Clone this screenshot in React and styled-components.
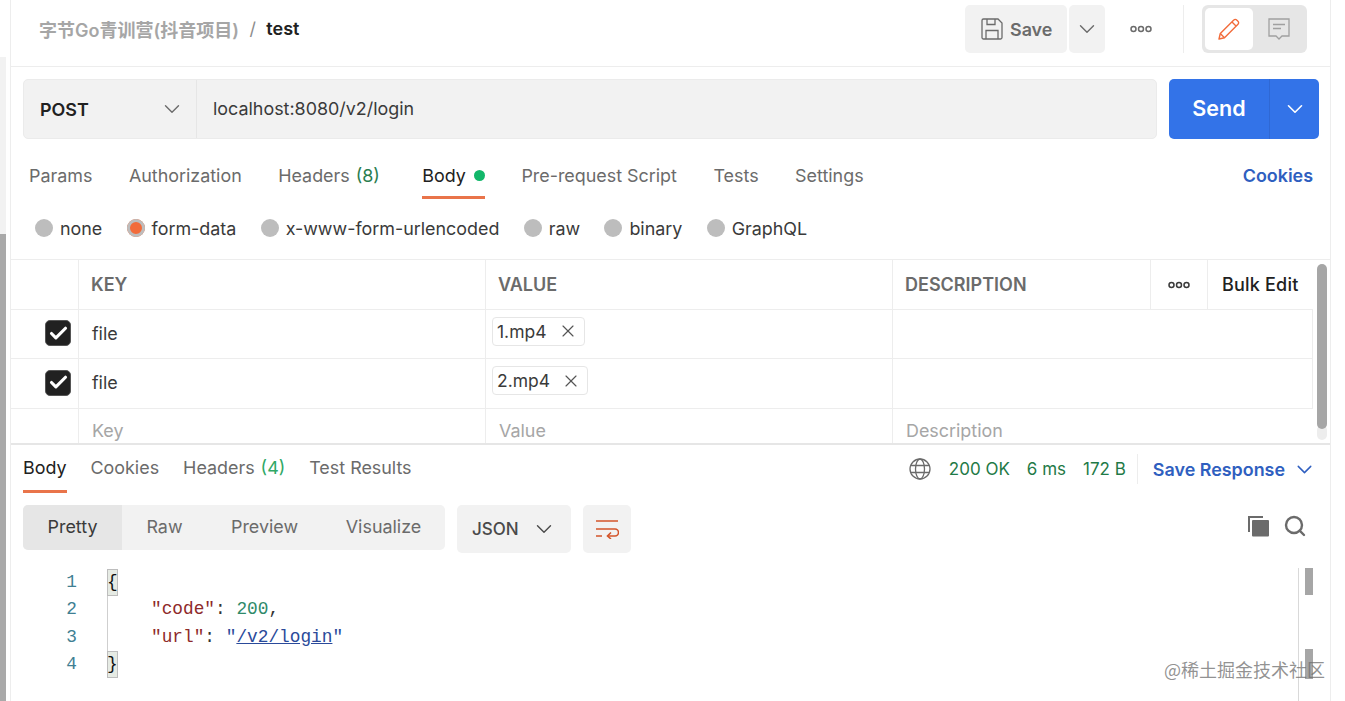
import styled, { createGlobalStyle } from "styled-components";
import { ChevronDown, X, Search, Check } from "lucide-react";

const GlobalStyle = createGlobalStyle`
  html, body {
    margin: 0;
    padding: 0;
    height: 701px;
    overflow: hidden;
    background: #fff;
  }
  * { box-sizing: border-box; }
  body {
    font-family: Inter, "Noto Sans CJK SC", "Liberation Sans", sans-serif;
    font-size: 17.9px;
    color: #212121;
  }
`;

const Page = styled.div`
  position: relative;
  display: flex;
  width: 1345px;
  height: 701px;
  overflow: hidden;
`;

const Gutter = styled.div`
  width: 11px;
  flex: none;
  border-right: 1px solid #ededed;
  display: flex;
  flex-direction: column;
`;

const GutterTop = styled.div`
  height: 57px;
`;

const GutterTrack = styled.div`
  width: 6px;
  height: 177px;
  background: #f2f2f2;
`;

const GutterThumb = styled.div`
  width: 6px;
  flex: 1;
  background: #a9a9a9;
`;

const Main = styled.main`
  width: 1320px;
  flex: none;
  border-right: 1px solid #ededed;
  display: flex;
  flex-direction: column;
`;

const Header = styled.header`
  height: 67px;
  flex: none;
  display: flex;
  align-items: flex-start;
  padding: 5px 23px 0 28px;
  border-bottom: 1px solid #ededed;
`;

const Crumbs = styled.div`
  flex: 1;
  display: flex;
  align-items: center;
  height: 47px;
  font-weight: 600;
`;

const CrumbParent = styled.span`
  color: #a6a6a6;
  font-size: 18px;
`;

const CrumbSep = styled.span`
  color: #8c8c8c;
  margin: 0 10.5px;
  font-weight: 400;
`;

const CrumbCurrent = styled.span`
  color: #212121;
  font-size: 18px;
`;

const SaveButton = styled.div`
  width: 102px;
  height: 48px;
  background: #f2f2f2;
  border-radius: 5px;
  display: flex;
  align-items: center;
  gap: 6px;
  padding-left: 15px;
  font-weight: 600;
  color: #6b6b6b;
`;

const SaveCaret = styled.div`
  width: 36px;
  height: 48px;
  margin-left: 2px;
  background: #f2f2f2;
  border-radius: 5px;
  display: flex;
  align-items: center;
  justify-content: center;
  color: #6b6b6b;
`;

const MoreButton = styled.div`
  width: 79px;
  height: 48px;
  padding-right: 6px;
  display: flex;
  align-items: center;
  justify-content: center;
  color: #6b6b6b;
  border-right: 1px solid #ededed;
`;

const ModeToggle = styled.div`
  width: 105px;
  height: 48px;
  margin-left: 18px;
  background: #e6e6e6;
  border-radius: 6px;
  padding: 3px;
  display: flex;
`;

const ModeItem = styled.div`
  width: 48px;
  flex: ${(p) => (p.$active ? "none" : 1)};
  display: flex;
  align-items: center;
  justify-content: center;
  border-radius: 5px;
  background: ${(p) => (p.$active ? "#fff" : "transparent")};
  color: ${(p) => (p.$active ? "#f26b3a" : "#a0a0a0")};
`;

const UrlRow = styled.div`
  display: flex;
  gap: 12px;
  padding: 12px 11px 0 12px;
`;

const UrlBox = styled.div`
  flex: 1;
  height: 60px;
  display: flex;
  background: #f2f2f2;
  border: 1px solid #ebebeb;
  border-radius: 5px;
`;

const MethodSelect = styled.div`
  width: 173px;
  display: flex;
  align-items: center;
  justify-content: space-between;
  padding: 0 11px 0 16px;
  border-right: 1px solid #e6e6e6;
  font-weight: 600;
  color: #212121;
`;

const UrlText = styled.div`
  display: flex;
  align-items: center;
  padding: 0 0 2px 16px;
  color: #3a3a3a;
`;

const SendButton = styled.div`
  width: 150px;
  height: 60px;
  display: flex;
  background: #3373e8;
  border-radius: 5px;
  color: #fff;
`;

const SendLabel = styled.div`
  width: 101px;
  display: flex;
  align-items: center;
  justify-content: center;
  padding-bottom: 2px;
  font-size: 21.5px;
  font-weight: 600;
  border-right: 1px solid #2f68d4;
`;

const SendCaret = styled.div`
  flex: 1;
  display: flex;
  align-items: center;
  justify-content: center;
`;

const RequestTabs = styled.nav`
  height: 60px;
  flex: none;
  display: flex;
  gap: 36.5px;
  padding: 0 17px 0 18px;
`;

const Tab = styled.div`
  display: flex;
  align-items: center;
  height: 100%;
  padding-top: 19px;
  padding-bottom: 4px;
  margin-right: ${(p) => (p.$wide ? 6 : 0)}px;
  border-bottom: 3px solid ${(p) => (p.$active ? "#e9744a" : "transparent")};
  color: ${(p) => (p.$active ? "#212121" : "#6b6b6b")};
  white-space: nowrap;
`;

const Count = styled.span`
  color: ${(p) => p.$color};
  margin-left: 6px;
`;

const BodyDot = styled.span`
  width: 11px;
  height: 11px;
  margin-left: 8px;
  border-radius: 50%;
  background: #12b76a;
`;

const TabLink = styled.div`
  margin-left: auto;
  display: flex;
  align-items: center;
  padding-top: 16px;
  padding-bottom: 4px;
  color: #2f5fc0;
  font-weight: 600;
`;

const RadioRow = styled.div`
  height: 60px;
  flex: none;
  display: flex;
  align-items: center;
  gap: 24.3px;
  padding: 0 0 2px 24px;
`;

const RadioItem = styled.label`
  display: flex;
  align-items: center;
  gap: 7px;
  color: #3a3a3a;
`;

const RadioDot = styled.span`
  width: 18px;
  height: 18px;
  border-radius: 50%;
  background: ${(p) => (p.$on ? "#f26b3a" : "#bdbdbd")};
  box-shadow: ${(p) => (p.$on ? "inset 0 0 0 3px #bdbdbd" : "none")};
`;

const TableWrap = styled.div`
  height: 186px;
  flex: none;
  display: flex;
  border-top: 1px solid #ededed;
  border-bottom: 2px solid #e6e6e6;
  overflow: hidden;
`;

const Table = styled.div`
  width: 1302px;
  flex: none;
  display: grid;
  grid-template-columns: 67px 407px 407px 258px 57px 106px;
  grid-template-rows: 50px 49px 50px 34px;
`;

const HeadCell = styled.div`
  display: flex;
  align-items: center;
  padding-left: 12px;
  font-size: 18px;
  font-weight: 600;
  color: #6b6b6b;
  border-left: ${(p) => (p.$first ? "none" : "1px solid #ededed")};
  border-bottom: 1px solid #ededed;
`;

const HeadAction = styled(HeadCell)`
  padding-left: 14px;
  color: #212121;
  font-weight: 500;
  letter-spacing: 0.2px;
`;

const HeadDots = styled(HeadCell)`
  padding-left: 17px;
  color: #3a3a3a;
`;

const CheckCell = styled.div`
  display: flex;
  align-items: center;
  padding: 0 0 2px 34px;
  border-bottom: ${(p) => (p.$last ? "none" : "1px solid #ededed")};
`;

const CheckBox = styled.span`
  width: 26px;
  height: 26px;
  border-radius: 5px;
  background: #212121;
  border: 1px solid #555;
  display: flex;
  align-items: center;
  justify-content: center;
  color: #fff;
`;

const Cell = styled.div`
  display: flex;
  align-items: center;
  padding-left: ${(p) => p.$pad ?? 13}px;
  padding-top: ${(p) => (p.$last ? 8 : 0)}px;
  padding-bottom: ${(p) => (p.$last ? 0 : 2)}px;
  grid-column: ${(p) => p.$span ?? "auto"};
  border-left: 1px solid #ededed;
  border-right: ${(p) => (p.$end ? "1px solid #ededed" : "none")};
  border-bottom: ${(p) => (p.$last ? "none" : "1px solid #ededed")};
  color: ${(p) => (p.$muted ? "#a6a6a6" : "#3a3a3a")};
`;

const FileChip = styled.span`
  height: 29px;
  margin-top: -4px;
  display: flex;
  align-items: center;
  gap: 11px;
  padding: 0 6px 0 4px;
  border: 1px solid #e6e6e6;
  border-radius: 4px;
  font-size: 17.5px;
  color: #3a3a3a;
`;

const TableScroll = styled.div`
  flex: 1;
  position: relative;
`;

const TableThumb = styled.div`
  position: absolute;
  left: 4px;
  top: 4px;
  width: 10px;
  height: 165px;
  border-radius: 5px;
  background: #a6a6a6;
`;

const TableThumbEnd = styled.div`
  position: absolute;
  left: 4px;
  top: 165px;
  width: 10px;
  height: 15px;
  border-radius: 5px;
  background: #ededed;
`;

const ResponseBar = styled.div`
  height: 48px;
  flex: none;
  display: flex;
  align-items: stretch;
  padding: 0 13px 0 12px;
`;

const ResponseTabs = styled.nav`
  display: flex;
  gap: 24px;
`;

const ResponseTab = styled(Tab)`
  padding-top: 0;
  padding-bottom: 0;
`;

const ResponseStatus = styled.div`
  margin-left: auto;
  display: flex;
  align-items: center;
  color: #6b6b6b;
`;

const StatusValue = styled.span`
  color: #1f7a47;
  font-size: 17px;
  margin-left: ${(p) => p.$gap}px;
`;

const StatusDivider = styled.span`
  width: 1px;
  height: 30px;
  margin: 0 15px 0 11px;
  background: #ededed;
`;

const SaveResponse = styled.span`
  display: flex;
  align-items: center;
  gap: 7px;
  color: #2f5fc0;
  font-weight: 600;
`;

const Toolbar = styled.div`
  height: 75px;
  flex: none;
  display: flex;
  align-items: flex-start;
  padding: 12px 23px 0 12px;
`;

const ViewTabs = styled.div`
  width: 422px;
  height: 45px;
  display: flex;
  background: #f2f2f2;
  border-radius: 5px;
  overflow: hidden;
`;

const ViewTab = styled.div`
  width: ${(p) => p.$w}px;
  display: flex;
  align-items: center;
  justify-content: center;
  padding-bottom: 2px;
  background: ${(p) => (p.$active ? "#e6e6e6" : "transparent")};
  color: ${(p) => (p.$active ? "#3a3a3a" : "#6b6b6b")};
`;

const FormatSelect = styled.div`
  width: 114px;
  height: 48px;
  margin-left: 12px;
  display: flex;
  align-items: center;
  justify-content: space-between;
  padding: 0 14px 0 15px;
  background: #f2f2f2;
  border-radius: 5px;
  font-size: 17px;
  font-weight: 500;
  color: #4a4a4a;
`;

const WrapButton = styled.div`
  width: 48px;
  height: 48px;
  margin-left: 12px;
  display: flex;
  align-items: center;
  justify-content: center;
  background: #f2f2f2;
  border-radius: 5px;
  color: #d4552b;
`;

const ToolIcons = styled.div`
  margin-left: auto;
  height: 42px;
  display: flex;
  align-items: center;
  gap: 13px;
  color: #6b6b6b;
`;

const CodeArea = styled.div`
  flex: 1;
  display: flex;
  min-height: 0;
`;

const CodeLines = styled.div`
  width: 1288px;
  flex: none;
  padding-top: 1px;
  font-family: "Liberation Mono", "DejaVu Sans Mono", monospace;
  font-size: 17.8px;
  line-height: 27.3px;
  border-right: 1px solid #d9d9d9;
`;

const Line = styled.div`
  display: flex;
  height: 27.3px;
  white-space: pre;
`;

const LineNo = styled.span`
  width: 66px;
  flex: none;
  text-align: right;
  color: #3f7f93;
`;

const LineBody = styled.span`
  margin-left: 30px;
  padding-left: ${(p) => (p.$guide ? 44 : 0)}px;
  box-shadow: ${(p) => (p.$guide ? "inset 1px 0 0 #cfcfcf" : "none")};
`;

const Brace = styled.span`
  display: inline-block;
  width: 11px;
  height: 27px;
  background: #e6ebe4;
  outline: 1px solid #bdbdbd;
  outline-offset: -1px;
  color: #111;
  overflow: hidden;
`;

const Key = styled.span`
  color: #8e2a2a;
`;

const Num = styled.span`
  color: #2f8a6a;
`;

const Str = styled.span`
  color: #2a4a9a;
`;

const StrLink = styled(Str)`
  text-decoration: underline;
`;

const Punct = styled.span`
  color: #333;
`;

const CodeScroll = styled.div`
  flex: 1;
  position: relative;
`;

const CodeThumb = styled.div`
  position: absolute;
  left: 6px;
  top: ${(p) => p.$top}px;
  width: 8px;
  height: ${(p) => p.$h}px;
  background: #a6a6a6;
`;

const Watermark = styled.div`
  position: absolute;
  left: 1164px;
  top: 657px;
  font-family: "Noto Sans CJK SC", sans-serif;
  font-size: 18px;
  line-height: 24px;
  color: rgba(110, 110, 110, 0.75);
  white-space: nowrap;
`;

const SaveIcon = () => (
  <svg width="24" height="24" viewBox="0 0 24 24" fill="none" stroke="currentColor" strokeWidth="1.3">
    <path d="M2 3.500A1.500 1.500 0 0 1 3.500 2H18l4 4v14.500a1.500 1.500 0 0 1-1.500 1.500H3.500A1.500 1.500 0 0 1 2 20.500z" />
    <path d="M7 2v5.500h8V2M6 22v-8.500h12V22" />
  </svg>
);

const Dots = () => (
  <svg width="22" height="8" viewBox="0 0 22 8" fill="none" stroke="currentColor" strokeWidth="1.500">
    <circle cx="3.500" cy="4" r="2.500" />
    <circle cx="11" cy="4" r="2.500" />
    <circle cx="18.500" cy="4" r="2.500" />
  </svg>
);

const PencilIcon = () => (
  <svg width="24" height="24" viewBox="0 0 24 24" fill="none" stroke="currentColor" strokeWidth="1.400" strokeLinejoin="round">
    <path d="M2 22l1.300-5.500L16.800 3a2 2 0 0 1 2.900 0l1.300 1.300a2 2 0 0 1 0 2.900L7.500 20.700z" />
    <path d="M3.300 16.500l4.200 4.200M15 5l4 4" />
  </svg>
);

const CommentIcon = () => (
  <svg width="24" height="24" viewBox="0 0 24 24" fill="none" stroke="currentColor" strokeWidth="1.300">
    <path d="M2 2h20v17h-7l-3 3-3-3H2z" />
    <path d="M6 7.500h12M6 11.500h8" />
  </svg>
);

const WrapIcon = () => (
  <svg width="24" height="20" viewBox="0 0 24 20" fill="none" stroke="currentColor" strokeWidth="1.600">
    <path d="M1 2h22M1 10h19a3 3 0 0 1 0 7h-7M1 17h6" />
    <path d="M16 13.500L12.500 17l3.500 3" />
  </svg>
);

const CopyIcon = () => (
  <svg width="23" height="22" viewBox="0 0 23 22" fill="currentColor">
    <path d="M1 1h15v2H3v14H1z" />
    <rect x="5" y="5" width="17" height="16.500" rx="1" />
  </svg>
);

const GlobeIcon = () => (
  <svg width="22" height="22" viewBox="0 0 22 22" fill="none" stroke="currentColor" strokeWidth="1.300">
    <circle cx="11" cy="11" r="10" />
    <ellipse cx="11" cy="11" rx="4.500" ry="10" />
    <path d="M2 7.500h18M2 14.500h18" />
  </svg>
);

const requestTabs = [
  { label: "Params" },
  { label: "Authorization" },
  { label: "Headers", count: "(8)", color: "#2a7d4f", wide: true },
  { label: "Body", active: true, dot: true },
  { label: "Pre-request Script" },
  { label: "Tests" },
  { label: "Settings" },
];

const bodyTypes = ["none", "form-data", "x-www-form-urlencoded", "raw", "binary", "GraphQL"];

const files = ["1.mp4", "2.mp4"];

const viewTabs = [
  { label: "Pretty", w: 99, active: true },
  { label: "Raw", w: 85 },
  { label: "Preview", w: 115 },
  { label: "Visualize", w: 123 },
];

export default function App() {
  return (
    <Page>
      <GlobalStyle />
      <Gutter>
        <GutterTop />
        <GutterTrack />
        <GutterThumb />
      </Gutter>
      <Main>
        <Header>
          <Crumbs>
            <CrumbParent>字节Go青训营(抖音项目)</CrumbParent>
            <CrumbSep>/</CrumbSep>
            <CrumbCurrent>test</CrumbCurrent>
          </Crumbs>
          <SaveButton>
            <SaveIcon />
            Save
          </SaveButton>
          <SaveCaret>
            <ChevronDown size={26} strokeWidth={1.3} />
          </SaveCaret>
          <MoreButton>
            <Dots />
          </MoreButton>
          <ModeToggle>
            <ModeItem $active>
              <PencilIcon />
            </ModeItem>
            <ModeItem>
              <CommentIcon />
            </ModeItem>
          </ModeToggle>
        </Header>

        <UrlRow>
          <UrlBox>
            <MethodSelect>
              POST
              <ChevronDown size={26} strokeWidth={1.3} color="#6b6b6b" />
            </MethodSelect>
            <UrlText>localhost:8080/v2/login</UrlText>
          </UrlBox>
          <SendButton>
            <SendLabel>Send</SendLabel>
            <SendCaret>
              <ChevronDown size={26} strokeWidth={1.5} />
            </SendCaret>
          </SendButton>
        </UrlRow>

        <RequestTabs>
          {requestTabs.map((tab) => (
            <Tab key={tab.label} $active={tab.active} $wide={tab.wide}>
              {tab.label}
              {tab.count && <Count $color={tab.color}>{tab.count}</Count>}
              {tab.dot && <BodyDot />}
            </Tab>
          ))}
          <TabLink>Cookies</TabLink>
        </RequestTabs>

        <RadioRow>
          {bodyTypes.map((type) => (
            <RadioItem key={type}>
              <RadioDot $on={type === "form-data"} />
              {type}
            </RadioItem>
          ))}
        </RadioRow>

        <TableWrap>
          <Table>
            <HeadCell $first />
            <HeadCell>KEY</HeadCell>
            <HeadCell>VALUE</HeadCell>
            <HeadCell>DESCRIPTION</HeadCell>
            <HeadDots>
              <Dots />
            </HeadDots>
            <HeadAction>Bulk Edit</HeadAction>

            {files.map((file) => (
              <FileRow key={file} file={file} />
            ))}

            <CheckCell $last />
            <Cell $last $muted>Key</Cell>
            <Cell $last $muted>Value</Cell>
            <Cell $last $muted $span="span 3">Description</Cell>
          </Table>
          <TableScroll>
            <TableThumbEnd />
            <TableThumb />
          </TableScroll>
        </TableWrap>

        <ResponseBar>
          <ResponseTabs>
            <ResponseTab $active>Body</ResponseTab>
            <ResponseTab>Cookies</ResponseTab>
            <ResponseTab>
              Headers<Count $color="#2fa866">(4)</Count>
            </ResponseTab>
            <ResponseTab>Test Results</ResponseTab>
          </ResponseTabs>
          <ResponseStatus>
            <GlobeIcon />
            <StatusValue $gap={18}>200 OK</StatusValue>
            <StatusValue $gap={17}>6 ms</StatusValue>
            <StatusValue $gap={17}>172 B</StatusValue>
            <StatusDivider />
            <SaveResponse>
              Save Response
              <ChevronDown size={25} strokeWidth={1.4} />
            </SaveResponse>
          </ResponseStatus>
        </ResponseBar>

        <Toolbar>
          <ViewTabs>
            {viewTabs.map((tab) => (
              <ViewTab key={tab.label} $w={tab.w} $active={tab.active}>
                {tab.label}
              </ViewTab>
            ))}
          </ViewTabs>
          <FormatSelect>
            JSON
            <ChevronDown size={26} strokeWidth={1.3} />
          </FormatSelect>
          <WrapButton>
            <WrapIcon />
          </WrapButton>
          <ToolIcons>
            <CopyIcon />
            <Search size={24} strokeWidth={2.4} />
          </ToolIcons>
        </Toolbar>

        <CodeArea>
          <CodeLines>
            <Line>
              <LineNo>1</LineNo>
              <LineBody>
                <Brace>{"{"}</Brace>
              </LineBody>
            </Line>
            <Line>
              <LineNo>2</LineNo>
              <LineBody $guide>
                <Key>"code"</Key>
                <Punct>: </Punct>
                <Num>200</Num>
                <Punct>,</Punct>
              </LineBody>
            </Line>
            <Line>
              <LineNo>3</LineNo>
              <LineBody $guide>
                <Key>"url"</Key>
                <Punct>: </Punct>
                <Str>"</Str>
                <StrLink>/v2/login</StrLink>
                <Str>"</Str>
              </LineBody>
            </Line>
            <Line>
              <LineNo>4</LineNo>
              <LineBody>
                <Brace>{"}"}</Brace>
              </LineBody>
            </Line>
          </CodeLines>
          <CodeScroll>
            <CodeThumb $top={0} $h={27} />
            <CodeThumb $top={81} $h={30} />
          </CodeScroll>
        </CodeArea>
      </Main>
      <Watermark>@稀土掘金技术社区</Watermark>
    </Page>
  );
}

function FileRow({ file }) {
  return (
    <>
      <CheckCell>
        <CheckBox>
          <Check size={21} strokeWidth={3.6} />
        </CheckBox>
      </CheckCell>
      <Cell>file</Cell>
      <Cell $pad={6}>
        <FileChip>
          {file}
          <X size={20} strokeWidth={1.4} color="#555" />
        </FileChip>
      </Cell>
      <Cell $span="span 3" $end />
    </>
  );
}
